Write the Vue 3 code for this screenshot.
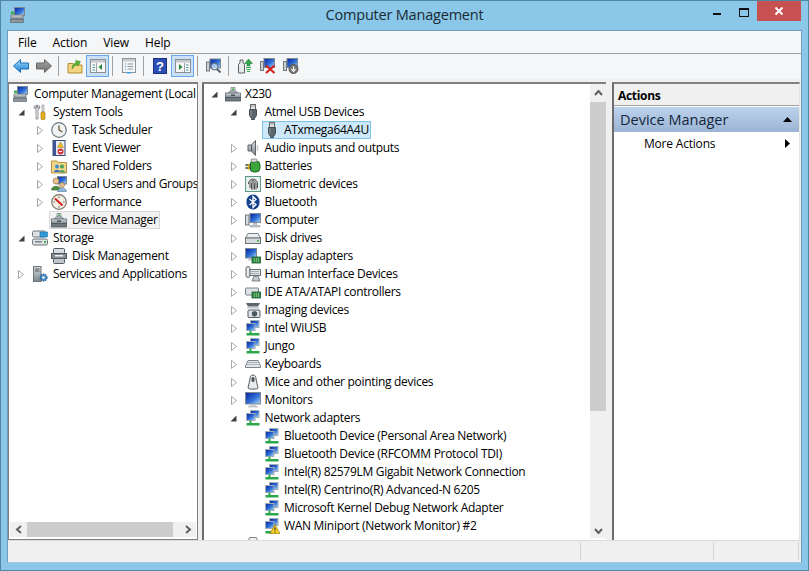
<script setup>
const menus = ["File", "Action", "View", "Help"];

const tools = [
  { icon: "back" },
  { icon: "forward" },
  { sep: true },
  { icon: "up" },
  { icon: "paneleft", active: true },
  { sep: true },
  { icon: "list" },
  { sep: true },
  { icon: "help" },
  { icon: "paneright", active: true },
  { sep: true },
  { icon: "scan" },
  { sep: true },
  { icon: "update" },
  { icon: "remove" },
  { icon: "disable" },
];

const leftTree = [
  { level: 0, icon: "mgmt", label: "Computer Management (Local" },
  { level: 1, arrow: "open", icon: "tools", label: "System Tools" },
  { level: 2, arrow: "closed", icon: "clock", label: "Task Scheduler" },
  { level: 2, arrow: "closed", icon: "event", label: "Event Viewer" },
  { level: 2, arrow: "closed", icon: "share", label: "Shared Folders" },
  { level: 2, arrow: "closed", icon: "users", label: "Local Users and Groups" },
  { level: 2, arrow: "closed", icon: "perf", label: "Performance" },
  { level: 2, icon: "devmgr", label: "Device Manager", selected: "idle" },
  { level: 1, arrow: "open", icon: "storage", label: "Storage" },
  { level: 2, icon: "diskmgmt", label: "Disk Management" },
  { level: 1, arrow: "closed", icon: "services", label: "Services and Applications" },
];

const deviceTree = [
  { level: 0, arrow: "open", icon: "devmgr", label: "X230" },
  { level: 1, arrow: "open", icon: "usb", label: "Atmel USB Devices" },
  { level: 2, icon: "usb", label: "ATxmega64A4U", selected: "focus" },
  { level: 1, arrow: "closed", icon: "speaker", label: "Audio inputs and outputs" },
  { level: 1, arrow: "closed", icon: "battery", label: "Batteries" },
  { level: 1, arrow: "closed", icon: "finger", label: "Biometric devices" },
  { level: 1, arrow: "closed", icon: "bluetooth", label: "Bluetooth" },
  { level: 1, arrow: "closed", icon: "pc", label: "Computer" },
  { level: 1, arrow: "closed", icon: "drive", label: "Disk drives" },
  { level: 1, arrow: "closed", icon: "display", label: "Display adapters" },
  { level: 1, arrow: "closed", icon: "hid", label: "Human Interface Devices" },
  { level: 1, arrow: "closed", icon: "ide", label: "IDE ATA/ATAPI controllers" },
  { level: 1, arrow: "closed", icon: "imaging", label: "Imaging devices" },
  { level: 1, arrow: "closed", icon: "net", label: "Intel WiUSB" },
  { level: 1, arrow: "closed", icon: "net", label: "Jungo" },
  { level: 1, arrow: "closed", icon: "keyboard", label: "Keyboards" },
  { level: 1, arrow: "closed", icon: "mouse", label: "Mice and other pointing devices" },
  { level: 1, arrow: "closed", icon: "monitor", label: "Monitors" },
  { level: 1, arrow: "open", icon: "net", label: "Network adapters" },
  { level: 2, icon: "net", label: "Bluetooth Device (Personal Area Network)" },
  { level: 2, icon: "net", label: "Bluetooth Device (RFCOMM Protocol TDI)" },
  { level: 2, icon: "net", label: "Intel(R) 82579LM Gigabit Network Connection" },
  { level: 2, icon: "net", label: "Intel(R) Centrino(R) Advanced-N 6205" },
  { level: 2, icon: "net", label: "Microsoft Kernel Debug Network Adapter" },
  { level: 2, icon: "netwarn", label: "WAN Miniport (Network Monitor) #2" },
  { level: 1, icon: "port", label: "" },
];
</script>

<template>
  <div class="window">
    <svg class="sprite" width="0" height="0">
      <defs>
        <linearGradient id="scr" x1="0" y1="0" x2="1" y2="1">
          <stop offset="0" stop-color="#06209c" />
          <stop offset=".55" stop-color="#2f6fd8" />
          <stop offset="1" stop-color="#b5dcf8" />
        </linearGradient>
        <linearGradient id="metal" x1="0" y1="0" x2="0" y2="1">
          <stop offset="0" stop-color="#d8dde0" />
          <stop offset="1" stop-color="#7b868c" />
        </linearGradient>
        <linearGradient id="arrowblue" x1="0" y1="0" x2="0" y2="1">
          <stop offset="0" stop-color="#9ad8fa" />
          <stop offset="1" stop-color="#1f7fd0" />
        </linearGradient>
        <linearGradient id="arrowgrey" x1="0" y1="0" x2="0" y2="1">
          <stop offset="0" stop-color="#a8a8a8" />
          <stop offset="1" stop-color="#6c6c6c" />
        </linearGradient>
        <symbol id="i-back" viewBox="0 0 16 16">
          <path d="M.5 8 7.500 1.500V5H15.500V11H7.500V14.500Z" fill="url(#arrowblue)" stroke="#1a6fb5" />
        </symbol>
        <symbol id="i-forward" viewBox="0 0 16 16">
          <path d="M15.500 8 8.500 1.500V5H.5V11H8.500V14.500Z" fill="url(#arrowgrey)" stroke="#666" />
        </symbol>
        <symbol id="i-up" viewBox="0 0 16 16">
          <path d="M1 5.500H6L7 7H15V15H1Z" fill="#f3d67f" stroke="#b08d35" />
          <path d="M5 11C5 7 7 5 9.500 4.500L8.500 2.500 13.500 3.500 11 8 10.500 6.500C8.500 7 6.500 8.500 5 11Z" fill="#5cb531" stroke="#36801a" stroke-width=".5" />
        </symbol>
        <symbol id="i-paneleft" viewBox="0 0 16 16">
          <rect x=".5" y="1.500" width="15" height="13" fill="#f7f7f7" stroke="#8a8f94" />
          <rect x="1" y="2" width="14" height="2.500" fill="#c5c9cd" />
          <path d="M2.500 6.500H5V7.500H2.500ZM2.500 9H5V10H2.500ZM2.500 11.500H5V12.500H2.500Z" fill="#4a9a9c" />
          <path d="M12 6 8.500 9 12 12Z" fill="#2c8a3c" />
          <path d="M6.500 5V14" stroke="#9aa0a5" />
        </symbol>
        <symbol id="i-paneright" viewBox="0 0 16 16">
          <rect x=".5" y="1.500" width="15" height="13" fill="#f7f7f7" stroke="#8a8f94" />
          <rect x="1" y="2" width="14" height="2.500" fill="#c5c9cd" />
          <path d="M11 6.500H13.500V7.500H11ZM11 9H13.500V10H11ZM11 11.500H13.500V12.500H11Z" fill="#4a9a9c" />
          <path d="M4 6 7.500 9 4 12Z" fill="#2c8a3c" />
          <path d="M9.500 5V14" stroke="#9aa0a5" />
        </symbol>
        <symbol id="i-list" viewBox="0 0 16 16">
          <rect x="1.500" y=".5" width="13" height="14" fill="#f4f4f4" stroke="#8d9398" />
          <rect x="2" y="1" width="12" height="2.500" fill="#c8cccf" />
          <path d="M4 5.500H5V6.500H4ZM4 8H5V9H4ZM4 10.500H5V11.500H4Z" fill="#3d8fd0" />
          <path d="M6.500 6H12M6.500 8.500H12M6.500 11H12" stroke="#8a9aa8" />
          <rect x="6" y="14" width="4" height="1.500" fill="#39a0dd" />
        </symbol>
        <symbol id="i-help" viewBox="0 0 16 16">
          <rect x="1.500" y=".5" width="13" height="15" fill="#2d4fb5" stroke="#1b2f80" />
          <text x="8" y="13" text-anchor="middle" font-family="Liberation Sans, sans-serif" font-size="13" font-weight="700" fill="#fff">?</text>
        </symbol>
        <symbol id="i-scan" viewBox="0 0 16 16">
          <rect x="4" y="1" width="10.500" height="9" fill="url(#scr)" stroke="#7d8a94" />
          <rect x=".5" y="4" width="3" height="9" fill="#c9cfd3" stroke="#6f787e" />
          <circle cx="8.500" cy="8.500" r="3.500" fill="#cde7fa" fill-opacity=".7" stroke="#55626c" />
          <path d="M11 11 14.500 14.500" stroke="#55626c" stroke-width="2" />
        </symbol>
        <symbol id="i-update" viewBox="0 0 16 16">
          <path d="M1.500 15V6.500L3 5V2H6V5L7.500 6.500V15Z" fill="#e9eaeb" stroke="#5c6064" />
          <path d="M11.500 1 15.500 5.500H13V8H10V5.500H7.500Z" fill="#31a84a" stroke="#1c6f2e" stroke-width=".5" />
          <path d="M9 9.500H14M9.500 11.500H13.500M10 13.500H13" stroke="#31a84a" stroke-width="1.200" />
        </symbol>
        <symbol id="i-remove" viewBox="0 0 16 16">
          <rect x="4" y=".5" width="10.500" height="9" fill="url(#scr)" stroke="#7d8a94" />
          <rect x=".5" y="3.500" width="3" height="9" fill="#c9cfd3" stroke="#6f787e" />
          <path d="M6 7.500 14.500 15M14.500 7.500 6 15" stroke="#d22020" stroke-width="2.200" />
        </symbol>
        <symbol id="i-disable" viewBox="0 0 16 16">
          <rect x="4" y=".5" width="10.500" height="9" fill="url(#scr)" stroke="#7d8a94" />
          <rect x=".5" y="3.500" width="3" height="9" fill="#c9cfd3" stroke="#6f787e" />
          <circle cx="10.500" cy="11" r="4.500" fill="#777" stroke="#555" />
          <path d="M10.500 8.500V12M8.500 11 10.500 13.500 12.500 11" stroke="#fff" fill="none" stroke-width="1.200" />
        </symbol>
        <symbol id="i-mgmt" viewBox="0 0 16 16">
          <rect x="4.500" y=".5" width="10" height="8" fill="url(#scr)" stroke="#7d8a94" />
          <rect x="1" y="8" width="12" height="4" fill="url(#metal)" stroke="#5f696f" stroke-width=".7" />
          <rect x=".5" y="12.500" width="13" height="3" fill="#8d979d" stroke="#5f696f" stroke-width=".7" />
          <path d="M1 4.500H4V7H1Z" fill="#3fb04a" />
        </symbol>
        <symbol id="i-tools" viewBox="0 0 16 16">
          <path d="M3 1.500C1.500 3 2 5 4 5.500V15H6V5.500C8 5 8.500 3 7 1.500V4H5.500V1H4.500V4H3Z" fill="#eef0f1" stroke="#6a6f73" stroke-width=".7" />
          <rect x="10" y="1" width="2" height="7" fill="#d9dcdf" stroke="#7a7f83" stroke-width=".5" />
          <rect x="9" y="8" width="4" height="7.500" rx="1" fill="#e8b21c" stroke="#99710a" stroke-width=".6" />
        </symbol>
        <symbol id="i-clock" viewBox="0 0 16 16">
          <circle cx="8" cy="8" r="7.300" fill="#f0f2f3" stroke="#6f7b84" stroke-width="1.200" />
          <path d="M8 3.500V8L11.500 10" stroke="#5a4a20" fill="none" stroke-width="1.200" />
        </symbol>
        <symbol id="i-event" viewBox="0 0 16 16">
          <rect x="2" y=".5" width="12" height="15" fill="#e8ecf5" stroke="#3a4a7d" />
          <rect x="2" y="1" width="3" height="14" fill="#3f5596" />
          <path d="M9.500 2 12.500 7.500H6.500Z" fill="#f0c020" stroke="#a07a10" stroke-width=".5" />
          <circle cx="9.500" cy="11.500" r="3" fill="#d43a3a" />
          <path d="M8 11.500H11" stroke="#fff" />
        </symbol>
        <symbol id="i-share" viewBox="0 0 16 16">
          <path d="M.5 3H6L7 4.500H15.500V15H.5Z" fill="#f1d68a" stroke="#b4933f" />
          <circle cx="6" cy="8.500" r="2" fill="#3d8fd0" />
          <path d="M3 14C3 11 9 11 9 14Z" fill="#3d6fc0" />
          <circle cx="11" cy="8.500" r="2" fill="#40a060" />
          <path d="M8.500 14.500C8.500 11 14 11 14 14.500Z" fill="#40a060" />
        </symbol>
        <symbol id="i-users" viewBox="0 0 16 16">
          <rect x="6.500" y=".5" width="9" height="7.500" fill="url(#scr)" stroke="#7d8a94" />
          <circle cx="5" cy="5" r="3" fill="#e8c090" stroke="#8a6a3a" stroke-width=".6" />
          <path d="M.5 14C.5 9 9.500 9 9.500 14Z" fill="#4f8f3d" stroke="#2f5f22" stroke-width=".6" />
          <circle cx="11" cy="9" r="2.500" fill="#e8c090" stroke="#8a6a3a" stroke-width=".6" />
          <path d="M6.500 15.500C6.500 11 15.500 11 15.500 15.500Z" fill="#8fb8dd" stroke="#54789a" stroke-width=".6" />
        </symbol>
        <symbol id="i-perf" viewBox="0 0 16 16">
          <circle cx="8" cy="8" r="7.300" fill="#f3efe4" stroke="#7a7466" stroke-width="1.200" />
          <path d="M4 4.500 11.500 11.500" stroke="#d22020" stroke-width="2" />
          <path d="M8 2.500V4M13.500 8H12M2.500 8H4M8 13.500V12" stroke="#555" />
        </symbol>
        <symbol id="i-devmgr" viewBox="0 0 16 16">
          <path d="M6 1.500H10V5H6Z" fill="#e5e8ea" stroke="#6d767c" stroke-width=".7" />
          <rect x="7" y="2.500" width="2" height="1.500" fill="#3fb04a" />
          <path d="M3 7 5 5H11L13 7Z" fill="#c6cdd2" stroke="#6d767c" stroke-width=".7" />
          <rect x=".5" y="7" width="15" height="4.500" fill="url(#metal)" stroke="#5f696f" stroke-width=".8" />
          <rect x=".5" y="11.500" width="15" height="3.500" fill="#6f7a81" stroke="#4c555b" stroke-width=".8" />
          <rect x="6" y="8.500" width="4" height="1.500" fill="#45525a" />
        </symbol>
        <symbol id="i-storage" viewBox="0 0 16 16">
          <rect x=".5" y="1" width="13" height="6" rx="1.500" fill="#dfe3e6" stroke="#6a747a" />
          <rect x="8" y="2" width="7.500" height="5" fill="#2f9ad8" stroke="#1a6fa8" stroke-width=".6" />
          <rect x=".5" y="9" width="15" height="6" rx="1.500" fill="#dfe3e6" stroke="#6a747a" />
          <rect x="3" y="11" width="7" height="1.500" fill="#7b868c" />
          <rect x="12" y="11" width="2" height="2" fill="#3fb04a" />
        </symbol>
        <symbol id="i-diskmgmt" viewBox="0 0 16 16">
          <rect x="2.500" y=".5" width="11" height="5" rx="1" fill="#d9dddf" stroke="#555c61" />
          <rect x=".5" y="5.500" width="15" height="5" fill="#868f95" stroke="#4c555b" />
          <rect x="4" y="7" width="8" height="1.500" fill="#eee" />
          <rect x="2.500" y="10.500" width="11" height="5" rx="1" fill="#bfc5c9" stroke="#555c61" />
        </symbol>
        <symbol id="i-services" viewBox="0 0 16 16">
          <rect x="1.500" y=".5" width="7.500" height="15" fill="url(#metal)" stroke="#6a747a" />
          <path d="M3 3H7.500M3 5H7.500" stroke="#555" />
          <circle cx="11.500" cy="11.500" r="3.300" fill="#4a90c8" stroke="#2a5f90" stroke-width="1.500" stroke-dasharray="1.300 .8" />
          <circle cx="11.500" cy="11.500" r="1.200" fill="#fff" />
        </symbol>
        <symbol id="i-usb" viewBox="0 0 16 16">
          <rect x="5.500" y=".5" width="5" height="5" fill="#e0e3e5" stroke="#666" />
          <path d="M6.500 2H7.500M8.500 2H9.500" stroke="#666" />
          <path d="M4.500 5.500H11.500V11.500L9.500 14.500V15.500H6.500V14.500L4.500 11.500Z" fill="#5d666d" stroke="#474e54" />
          <path d="M6 6V12" stroke="#8a939a" />
        </symbol>
        <symbol id="i-speaker" viewBox="0 0 16 16">
          <path d="M3 5H6.500L10.500 .5V15.500L6.500 11H3Z" fill="url(#metal)" stroke="#5c646a" />
          <path d="M6.500 5V11" stroke="#4c555b" />
          <path d="M12.500 5V11" stroke="#c6cacd" stroke-width="1.500" />
        </symbol>
        <symbol id="i-battery" viewBox="0 0 16 16">
          <rect x="5" y="3" width="10" height="11" rx="4" fill="#3aa63c" stroke="#1e6a20" />
          <rect x="6" y="1" width="6" height="3" rx="1" fill="#e0e0e0" stroke="#555" stroke-width=".6" />
          <path d="M.5 7H6M.5 10H6" stroke="#333" stroke-width="1.300" />
          <path d="M3.500 6V12" stroke="#e8b21c" stroke-width="1.500" />
        </symbol>
        <symbol id="i-finger" viewBox="0 0 16 16">
          <rect x=".5" y=".5" width="15" height="15" fill="#e8f0ec" stroke="#5c9a8c" />
          <path d="M3.500 8C3.500 1.500 12.500 1.500 12.500 8V12M5 12V8C5 3.500 11 3.500 11 8V13.500M6.500 13.500V8C6.500 5.500 9.500 5.500 9.500 8V13.500M8 7V13.500" stroke="#2e2e2e" fill="none" stroke-width=".85" />
        </symbol>
        <symbol id="i-bluetooth" viewBox="0 0 16 16">
          <rect x="1.500" y=".5" width="13" height="15" rx="6.500" fill="#14408f" />
          <path d="M4.500 5 11 10.500 8 13.500V2.500L11 5.500 4.500 11" fill="none" stroke="#fff" stroke-width="1.300" />
        </symbol>
        <symbol id="i-pc" viewBox="0 0 16 16">
          <rect x="5" y="1.500" width="10.500" height="9" fill="url(#scr)" stroke="#7d8a94" />
          <rect x=".5" y="3" width="3.500" height="10" fill="#d7dcdf" stroke="#6f787e" />
          <path d="M8.500 11V13.500H5V15H15V13.500H11.500V11Z" fill="#c3c9cd" stroke="#8a9298" stroke-width=".5" />
        </symbol>
        <symbol id="i-drive" viewBox="0 0 16 16">
          <path d="M3 3.500H13L15.500 8H.5Z" fill="#eceeef" stroke="#7a838a" />
          <rect x=".5" y="8" width="15" height="5.500" fill="#d6dadd" stroke="#6a747a" />
          <rect x="12" y="10" width="2" height="1.500" fill="#3fb04a" />
        </symbol>
        <symbol id="i-display" viewBox="0 0 16 16">
          <rect x=".5" y=".5" width="11" height="9.500" fill="url(#scr)" stroke="#7d8a94" />
          <path d="M3 10.500H9V12.500H3Z" fill="#c3c9cd" />
          <rect x="7" y="9" width="8.500" height="6" fill="#2f8a4a" stroke="#145c2c" stroke-width=".8" />
          <path d="M9 11H14M9 13H14" stroke="#c4e0a0" stroke-dasharray="1 1" />
        </symbol>
        <symbol id="i-hid" viewBox="0 0 16 16">
          <rect x="1" y=".5" width="4" height="11" rx="2" fill="#e4e7e9" stroke="#5f696f" />
          <rect x="5" y="3.500" width="10.500" height="6" fill="#dfe3e6" stroke="#6a747a" />
          <path d="M6.500 5.500H14M6.500 7.500H14" stroke="#6a747a" stroke-dasharray="1 1" />
          <path d="M7 15 9 10H13L15 15Z" fill="#c3c9cd" stroke="#5f696f" stroke-width=".8" />
        </symbol>
        <symbol id="i-ide" viewBox="0 0 16 16">
          <rect x=".5" y="4" width="13" height="7" rx="1" fill="#dfe3e6" stroke="#7a838a" />
          <rect x="7" y="8" width="8.500" height="6" fill="#2f8a4a" stroke="#145c2c" stroke-width=".8" />
          <path d="M9 10H14M9 12H14" stroke="#c4e0a0" stroke-dasharray="1 1" />
        </symbol>
        <symbol id="i-imaging" viewBox="0 0 16 16">
          <path d="M1 1H15L13 4.500H3Z" fill="#5c656b" />
          <rect x="2" y="5" width="12" height="1.500" fill="#c3c9cd" />
          <rect x="3" y="8" width="12" height="7.500" rx="1" fill="#dfe3e6" stroke="#555c61" />
          <circle cx="9.500" cy="11.800" r="2.400" fill="#4d5a62" stroke="#2b3338" stroke-width=".6" />
        </symbol>
        <symbol id="i-net" viewBox="0 0 16 16">
          <rect x="5.500" y=".5" width="8.500" height="7" fill="url(#scr)" stroke="#a4aeb5" />
          <rect x="1.500" y="3.500" width="8.500" height="7" fill="url(#scr)" stroke="#a4aeb5" />
          <path d="M5.500 10.500V13" stroke="#2ba84a" stroke-width="2" />
          <rect x="1.500" y="13" width="13" height="2.500" fill="#2ba84a" />
        </symbol>
        <symbol id="i-netwarn" viewBox="0 0 16 16">
          <rect x="5.500" y=".5" width="8.500" height="7" fill="url(#scr)" stroke="#a4aeb5" />
          <rect x="1.500" y="3.500" width="8.500" height="7" fill="url(#scr)" stroke="#a4aeb5" />
          <rect x="1.500" y="13" width="7" height="2.500" fill="#2ba84a" />
          <path d="M11 6.500 16 15.500H6Z" fill="#f5d020" stroke="#9a7a10" stroke-width=".7" />
          <path d="M11 9.500V12.500M11 13.500V14.500" stroke="#222" />
        </symbol>
        <symbol id="i-keyboard" viewBox="0 0 16 16">
          <path d="M3 4.500H13L15.500 10V11.500H.5V10Z" fill="#e4e7e9" stroke="#7a838a" />
          <path d="M3.500 6.500H12.500M2.500 8.500H13.500" stroke="#7a838a" stroke-dasharray="1 1" />
        </symbol>
        <symbol id="i-mouse" viewBox="0 0 16 16">
          <path d="M8 1C5.500 1 5 3 5 5L3 14C3 15.500 13 15.500 13 14L11 5C11 3 10.500 1 8 1Z" fill="#e8eaec" stroke="#555c61" />
          <rect x="6.500" y="3" width="3" height="5" rx="1.500" fill="#4d565c" />
        </symbol>
        <symbol id="i-monitor" viewBox="0 0 16 16">
          <rect x=".5" y=".5" width="15" height="11.500" fill="url(#scr)" stroke="#7d8a94" />
          <path d="M5 12.500H11V14H13V15.500H3V14H5Z" fill="#c3c9cd" />
        </symbol>
        <symbol id="i-port" viewBox="0 0 16 16">
          <rect x="4" y="1.500" width="8" height="6" rx="1" fill="#f0f0f0" stroke="#7a838a" />
        </symbol>
      </defs>
    </svg>

    <header class="titlebar">
      <div class="title-left">
        <svg class="icon"><use href="#i-mgmt" /></svg>
      </div>
      <div class="title">Computer Management</div>
      <div class="controls">
        <span class="ctl-min"></span>
        <span class="ctl-max"></span>
        <span class="ctl-close">
          <svg width="10" height="10" viewBox="0 0 10 10">
            <path d="M1.500 1.500 8.500 8.500M8.500 1.500 1.500 8.500" stroke="#fff" stroke-width="2" />
          </svg>
        </span>
      </div>
    </header>

    <div class="client">
      <nav class="menubar">
        <span v-for="m in menus" :key="m" class="menu">{{ m }}</span>
      </nav>

      <div class="toolbar">
        <template v-for="(t, i) in tools" :key="i">
          <span v-if="t.sep" class="tool-sep"></span>
          <span v-else class="tool" :class="{ active: t.active }">
            <svg class="icon"><use :href="'#i-' + t.icon" /></svg>
          </span>
        </template>
      </div>

      <div class="panes">
        <section class="pane pane-left">
          <div class="tree">
            <div v-for="row in leftTree" :key="row.label" class="row" :style="{ paddingLeft: 4 + row.level * 19 + 'px' }">
              <span v-if="row.level > 0" class="tw">
                <svg v-if="row.arrow === 'open'" width="7" height="7" viewBox="0 0 7 7"><path d="M6.500 .5V6.500H.5Z" fill="#404040" /></svg>
                <svg v-else-if="row.arrow === 'closed'" width="6" height="9" viewBox="0 0 6 9"><path d="M.5 .5 5.500 4.500.5 8.500Z" fill="#fff" stroke="#a6a6a6" /></svg>
              </span>
              <span class="node" :class="row.selected">
                <svg class="icon"><use :href="'#i-' + row.icon" /></svg>
                <span class="label">{{ row.label }}</span>
              </span>
            </div>
          </div>
          <div class="hscroll">
            <span class="sb-btn">
              <svg width="8" height="9" viewBox="0 0 8 9"><path d="M6 1 2 4.500 6 8" fill="none" stroke="#606060" stroke-width="2" /></svg>
            </span>
            <span class="htrack"><span class="hthumb"></span></span>
            <span class="sb-btn">
              <svg width="8" height="9" viewBox="0 0 8 9"><path d="M2 1 6 4.500 2 8" fill="none" stroke="#606060" stroke-width="2" /></svg>
            </span>
          </div>
        </section>

        <section class="pane pane-mid">
          <div class="tree tree-mid">
            <div v-for="(row, i) in deviceTree" :key="i" class="row" :style="{ paddingLeft: 21 + row.level * 19.5 + 'px' }">
              <span class="tw">
                <svg v-if="row.arrow === 'open'" width="7" height="7" viewBox="0 0 7 7"><path d="M6.500 .5V6.500H.5Z" fill="#404040" /></svg>
                <svg v-else-if="row.arrow === 'closed'" width="6" height="9" viewBox="0 0 6 9"><path d="M.5 .5 5.500 4.500.5 8.500Z" fill="#fff" stroke="#a6a6a6" /></svg>
              </span>
              <span class="node" :class="row.selected">
                <svg class="icon"><use :href="'#i-' + row.icon" /></svg>
                <span class="label">{{ row.label }}</span>
              </span>
            </div>
          </div>
          <div class="vscroll">
            <span class="sb-btn v">
              <svg width="9" height="8" viewBox="0 0 9 8"><path d="M1 6 4.500 2 8 6" fill="none" stroke="#606060" stroke-width="2" /></svg>
            </span>
            <span class="vtrack"><span class="vthumb"></span></span>
            <span class="sb-btn v">
              <svg width="9" height="8" viewBox="0 0 9 8"><path d="M1 2 4.500 6 8 2" fill="none" stroke="#606060" stroke-width="2" /></svg>
            </span>
          </div>
        </section>

        <aside class="pane pane-right">
          <div class="actions-head">Actions</div>
          <div class="actions-section">
            <span>Device Manager</span>
            <svg width="9" height="5" viewBox="0 0 9 5"><path d="M4.500 0 9 5H0Z" fill="#000" /></svg>
          </div>
          <div class="actions-item">
            <span>More Actions</span>
            <svg width="5" height="9" viewBox="0 0 5 9"><path d="M0 0 5 4.500 0 9Z" fill="#000" /></svg>
          </div>
        </aside>
      </div>

      <footer class="statusbar">
        <span class="st st-main"></span>
        <span class="st st-mid"></span>
        <span class="st st-end"></span>
      </footer>
    </div>
  </div>
</template>

<style>
html, body {
  margin: 0;
  padding: 0;
  overflow: hidden;
}
</style>

<style scoped>
.window {
  width: 809px;
  height: 571px;
  box-sizing: border-box;
  background: #8ac7e8;
  border: 1px solid #4f86a6;
  padding: 0 6px 7px;
  display: flex;
  flex-direction: column;
  font-family: "Open Sans", "Noto Sans", sans-serif;
  font-size: 12px;
  color: #000;
}

.sprite {
  position: absolute;
}

.icon {
  width: 16px;
  height: 16px;
  flex: none;
  display: block;
}

.titlebar {
  height: 29px;
  flex: none;
  display: grid;
  grid-template-columns: 1fr auto 1fr;
  align-items: start;
}

.title-left {
  padding: 6px 0 0 3px;
}

.title {
  font-size: 14.5px;
  letter-spacing: -.2px;
  color: #1a2a33;
  padding-top: 4px;
}

.controls {
  display: flex;
  justify-content: flex-end;
  align-items: flex-start;
}

.ctl-min {
  width: 8px;
  height: 2px;
  background: #111;
  margin: 12px 18px 0 0;
}

.ctl-max {
  width: 8px;
  height: 6px;
  border: 1px solid #111;
  border-top-width: 2px;
  margin: 7px 8px 0 0;
}

.ctl-close {
  width: 44px;
  height: 20px;
  background: #c75050;
  display: flex;
  align-items: center;
  justify-content: center;
  margin-right: 1px;
}

.client {
  flex: 1;
  min-height: 0;
  display: flex;
  flex-direction: column;
  background: #f0f0f0;
  border: 1px solid #6f9fbc;
  border-bottom-color: #a8c8da;
}

.menubar {
  height: 23px;
  flex: none;
  box-sizing: border-box;
  background: #f5f6f7;
  border-bottom: 1px solid #a0a0a0;
  display: flex;
  align-items: center;
  padding-left: 2px;
}

.menu {
  padding: 0 8px;
  letter-spacing: -.1px;
}

.toolbar {
  height: 25px;
  flex: none;
  box-sizing: border-box;
  background: #f5f6f7;
  display: flex;
  align-items: flex-start;
  padding: 1px 0 0 1px;
}

.tool {
  width: 23px;
  height: 22px;
  box-sizing: border-box;
  display: flex;
  align-items: center;
  justify-content: center;
  border: 1px solid transparent;
}

.tool.active {
  background: #c9e0f7;
  border-color: #66a7e8;
}

.tool-sep {
  width: 1px;
  height: 20px;
  background: #a0a0a0;
  margin: 1px 4px 0 3px;
}

.panes {
  flex: 1;
  min-height: 0;
  display: flex;
  padding-top: 3px;
}

.pane {
  box-sizing: border-box;
  background: #fff;
  height: 458px;
  overflow: hidden;
}

.pane-left {
  width: 190px;
  border: 1px solid #7f7f7f;
  border-top-width: 2px;
  display: flex;
  flex-direction: column;
}

.pane-mid {
  width: 404px;
  margin-left: 4px;
  border-left: 2px solid #6d6d6d;
  border-top: 2px solid #7f7f7f;
  display: flex;
}

.pane-right {
  width: 188px;
  margin-left: 6px;
  border-left: 2px solid #6d6d6d;
  border-top: 2px solid #7f7f7f;
  border-right: 1px solid #e4e4e4;
}

.tree {
  flex: 1;
  min-width: 0;
  min-height: 0;
  overflow: hidden;
  white-space: nowrap;
  padding-top: 1px;
}

.row {
  height: 18px;
  display: flex;
  align-items: center;
}

.tw {
  width: 22px;
  margin-left: -22px;
  flex: none;
  display: flex;
  align-items: center;
  justify-content: center;
}

.node {
  display: flex;
  align-items: center;
  height: 18px;
  box-sizing: border-box;
  border: 1px solid transparent;
  margin-left: -2px;
  padding-left: 1px;
  padding-right: 1px;
}

.node.focus {
  background: #cde8f8;
  border-color: #7dc3ea;
}

.node.idle {
  background: #f2f2f2;
  border-color: #d9d9d9;
}

.label {
  padding-left: 5px;
  letter-spacing: -.3px;
  line-height: 16px;
}

.tree-mid .label {
  padding-left: 4px;
}

.hscroll {
  height: 15px;
  flex: none;
  margin: 0 1px 2px;
  background: #f0f0f0;
  display: flex;
}

.sb-btn {
  width: 17px;
  height: 15px;
  flex: none;
  display: flex;
  align-items: center;
  justify-content: center;
}

.sb-btn.v {
  width: 16px;
  height: 18px;
}

.vscroll .sb-btn.v:last-child {
  height: 15px;
}

.htrack {
  flex: 1;
  display: block;
}

.hthumb {
  display: block;
  width: 146px;
  height: 15px;
  background: #cdcdcd;
}

.vscroll {
  width: 16px;
  flex: none;
  background: #f0f0f0;
  display: flex;
  flex-direction: column;
  margin-bottom: 2px;
}

.vtrack {
  flex: 1;
  display: block;
}

.vthumb {
  display: block;
  height: 309px;
  background: #cdcdcd;
}

.actions-head {
  height: 22px;
  box-sizing: border-box;
  background: #f0f0f0;
  border-bottom: 1px solid #a0a0a0;
  font-weight: 700;
  padding: 3px 0 0 4px;
  letter-spacing: -.3px;
}

.actions-section {
  height: 25px;
  margin-top: 1px;
  background: linear-gradient(#bcd2ec, #9cb4d4);
  display: flex;
  align-items: center;
  justify-content: space-between;
  padding: 0 7px 0 6px;
  font-size: 14.5px;
  color: #12263c;
}

.actions-item {
  height: 23px;
  display: flex;
  align-items: center;
  justify-content: space-between;
  padding: 0 9px 0 30px;
  letter-spacing: -.2px;
}

.statusbar {
  height: 22px;
  flex: none;
  display: flex;
  background: #f0f0f0;
  border-top: 1px solid #dcdcdc;
  box-sizing: border-box;
}

.st {
  display: block;
  border-right: 1px solid #d4d4d4;
  margin: 1px 0 2px;
  box-sizing: border-box;
}

.st-main {
  width: 573px;
}

.st-mid {
  width: 133px;
}

.st-end {
  width: 85px;
}
</style>
